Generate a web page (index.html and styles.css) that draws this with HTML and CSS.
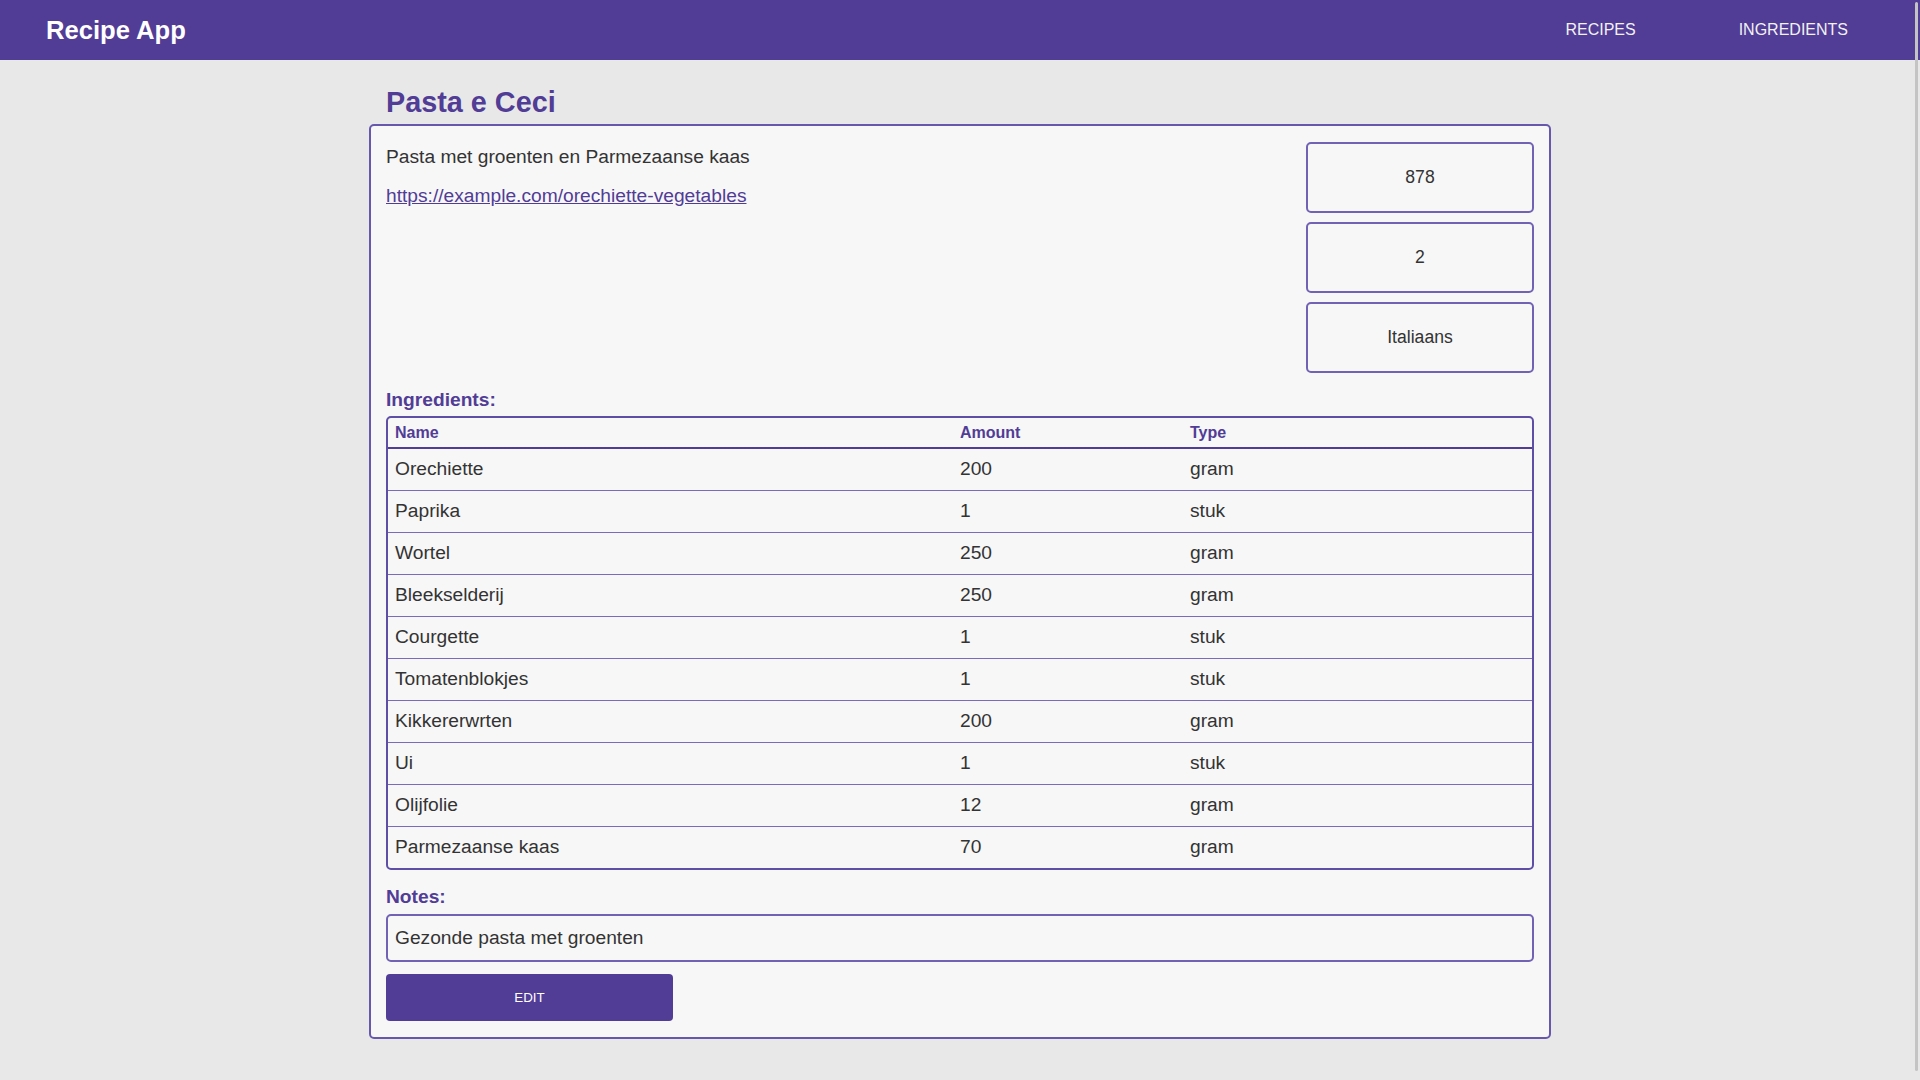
FILE: index.html
```html
<!DOCTYPE html>
<html lang="nl">
<head>
<meta charset="utf-8">
<title>Recipe App</title>
<link rel="stylesheet" href="styles.css">
</head>
<body>
<header class="topbar">
  <div class="brand">Recipe App</div>
  <nav class="nav">
    <a class="nav-link" href="#">RECIPES</a>
    <a class="nav-link" href="#">INGREDIENTS</a>
  </nav>
</header>

<main class="page">
  <h1 class="title">Pasta e Ceci</h1>
  <section class="card">
    <div class="top-row">
      <div class="info">
        <p class="desc">Pasta met groenten en Parmezaanse kaas</p>
        <p class="source"><a class="source-link" href="#">https://example.com/orechiette-vegetables</a></p>
      </div>
      <div class="facts">
        <div class="fact">878</div>
        <div class="fact">2</div>
        <div class="fact">Italiaans</div>
      </div>
    </div>

    <h2 class="label">Ingredients:</h2>
    <div class="table-wrap">
      <table class="ing-table">
        <colgroup>
          <col class="col-name">
          <col class="col-amount">
          <col class="col-type">
        </colgroup>
        <thead>
          <tr><th>Name</th><th>Amount</th><th>Type</th></tr>
        </thead>
        <tbody>
          <tr><td>Orechiette</td><td>200</td><td>gram</td></tr>
          <tr><td>Paprika</td><td>1</td><td>stuk</td></tr>
          <tr><td>Wortel</td><td>250</td><td>gram</td></tr>
          <tr><td>Bleekselderij</td><td>250</td><td>gram</td></tr>
          <tr><td>Courgette</td><td>1</td><td>stuk</td></tr>
          <tr><td>Tomatenblokjes</td><td>1</td><td>stuk</td></tr>
          <tr><td>Kikkererwrten</td><td>200</td><td>gram</td></tr>
          <tr><td>Ui</td><td>1</td><td>stuk</td></tr>
          <tr><td>Olijfolie</td><td>12</td><td>gram</td></tr>
          <tr><td>Parmezaanse kaas</td><td>70</td><td>gram</td></tr>
        </tbody>
      </table>
    </div>

    <h2 class="label label-notes">Notes:</h2>
    <div class="notes">Gezonde pasta met groenten</div>

    <button class="edit-btn" type="button">EDIT</button>
  </section>
</main>
<div class="scroll-thumb"></div>
</body>
</html>
```

FILE: styles.css
```css
* { box-sizing: border-box; }

html, body {
  margin: 0;
  padding: 0;
}

body {
  background: #e8e8e8;
  font-family: "Liberation Sans", Arial, Helvetica, sans-serif;
  color: #333333;
  overflow: hidden;
}

.topbar {
  height: 60px;
  background: #513c96;
  display: flex;
  align-items: center;
  justify-content: space-between;
  padding: 0 72px 0 46px;
}

.brand {
  color: #ffffff;
  font-weight: bold;
  font-size: 25.6px;
  line-height: 30px;
}

.nav {
  display: flex;
  gap: 103px;
}

.nav-link {
  color: #f2f2f2;
  text-decoration: none;
  font-size: 16px;
  line-height: 20px;
}

.page {
  width: 1182px;
  margin: 0 auto;
}

.title {
  margin: 26px 0 6px;
  padding-left: 17px;
  font-size: 28.8px;
  line-height: 32px;
  font-weight: bold;
  color: #513c96;
}

.card {
  background: #f7f7f7;
  border: 2px solid #6858ad;
  border-radius: 5px;
  padding: 16px 15px 16px;
}

.top-row {
  display: flex;
  justify-content: space-between;
  align-items: flex-start;
}

.info {
  flex: 1;
}

.desc, .source {
  margin: 0;
  font-size: 19.2px;
  line-height: 22px;
}

.desc { margin-top: 4px; }
.source { margin-top: 17px; }

.source-link {
  color: #513c96;
  text-decoration: underline;
}

.facts {
  width: 228px;
  display: flex;
  flex-direction: column;
  gap: 9px;
}

.fact {
  height: 71px;
  border: 2px solid #7262b4;
  border-radius: 5px;
  display: flex;
  align-items: center;
  justify-content: center;
  font-size: 17.6px;
  color: #333333;
}

.label {
  margin: 16px 0 5px;
  font-size: 19.2px;
  line-height: 22px;
  font-weight: bold;
  color: #513c96;
}

.label-notes {
  margin-top: 16px;
  margin-bottom: 6px;
}

.table-wrap {
  border: 2px solid #5f4ea6;
  border-radius: 5px;
  overflow: hidden;
}

.ing-table {
  width: 100%;
  border-collapse: collapse;
  table-layout: fixed;
}

.col-name { width: 565px; }
.col-amount { width: 230px; }

.ing-table th {
  height: 30px;
  padding: 0 7px;
  text-align: left;
  font-size: 16px;
  font-weight: bold;
  color: #513c96;
  border-bottom: 2px solid #513c96;
  vertical-align: middle;
}

.ing-table td {
  height: 42px;
  padding: 0 7px;
  font-size: 19.2px;
  color: #333333;
  border-bottom: 1px solid #7a6cb8;
  vertical-align: middle;
}

.ing-table tbody tr:last-child td {
  border-bottom: none;
  height: 42px;
}

.notes {
  border: 2px solid #7262b4;
  border-radius: 5px;
  padding: 11px 7px;
  font-size: 19.2px;
  line-height: 22px;
  color: #333333;
}

.edit-btn {
  display: block;
  margin-top: 12px;
  width: 25%;
  height: 47px;
  border: none;
  border-radius: 4px;
  background: #513c96;
  color: #ffffff;
  font-family: "Liberation Sans", Arial, sans-serif;
  font-size: 13.33px;
  cursor: pointer;
}

.scroll-thumb {
  position: fixed;
  top: 2px;
  bottom: 9px;
  right: 2px;
  width: 3px;
  background: #c4c4c4;
  border-radius: 2px;
}
```
